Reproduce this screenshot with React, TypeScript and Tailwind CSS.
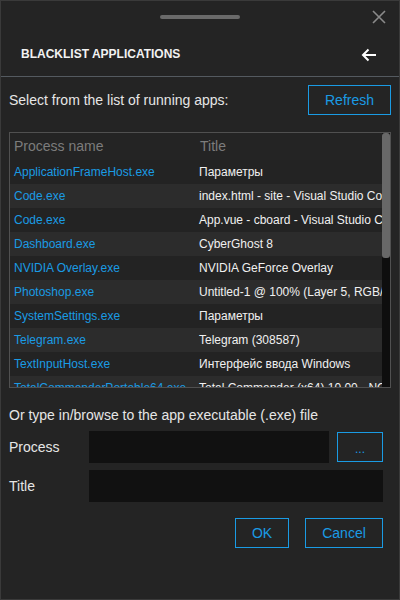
import React from "react";

const rows: [string, string][] = [
  ["ApplicationFrameHost.exe", "Параметры"],
  ["Code.exe", "index.html - site - Visual Studio Code"],
  ["Code.exe", "App.vue - cboard - Visual Studio Code"],
  ["Dashboard.exe", "CyberGhost 8"],
  ["NVIDIA Overlay.exe", "NVIDIA GeForce Overlay"],
  ["Photoshop.exe", "Untitled-1 @ 100% (Layer 5, RGB/8)"],
  ["SystemSettings.exe", "Параметры"],
  ["Telegram.exe", "Telegram (308587)"],
  ["TextInputHost.exe", "Интерфейс ввода Windows"],
  ["TotalCommanderPortable64.exe", "Total Commander (x64) 10.00 - NOT REGISTERED"],
];

export default function App() {
  return (
    <div
      className="w-[400px] h-[600px] bg-[#242424] border border-[#3a3a3a] flex flex-col relative overflow-hidden text-[#e8e8e8]"
      style={{ fontFamily: '"Liberation Sans", Arial, sans-serif' }}
    >
      {/* top bar */}
      <div className="h-[33px] flex justify-center pt-[14px] shrink-0">
        <div className="w-[80px] h-[4px] rounded-full bg-[#6a6a6a]" />
      </div>
      <svg
        className="absolute right-[13px] top-[9px]"
        width="14"
        height="14"
        viewBox="0 0 14 14"
      >
        <path d="M1 1 L13 13 M13 1 L1 13" stroke="#8a8a8a" strokeWidth="1.6" />
      </svg>

      {/* header */}
      <div className="h-[43px] flex items-center justify-between pl-[20px] pr-[22px] shrink-0 border-b border-[#545a60]">
        <div className="text-[12px] font-bold text-[#f2f2f2] -mt-[3px]">BLACKLIST APPLICATIONS</div>
        <svg width="16" height="14" viewBox="0 0 16 14" className="-mt-[1px]">
          <path d="M15 7 H2 M7.5 1.5 L2 7 L7.5 12.5" stroke="#ffffff" strokeWidth="2" fill="none" />
        </svg>
      </div>

      <div className="px-2 flex flex-col">
        <div className="flex items-center justify-between mt-[8px]">
          <div className="text-[14px] text-[#e6e6e6]">Select from the list of running apps:</div>
          <button className="w-[83px] h-[30px] border border-[#1a9be4] text-[#1a9be4] text-[14px]">Refresh</button>
        </div>

        {/* list */}
        <div className="mt-[17px] h-[256px] border border-[#505050] flex overflow-hidden">
          <div className="flex-1 overflow-hidden flex flex-col">
            <div className="h-[27px] shrink-0 flex items-center text-[14px] text-[#7c7c7c]">
              <div className="w-[190px] pl-[4px] shrink-0">Process name</div>
              <div className="whitespace-nowrap">Title</div>
            </div>
            {rows.map(([p, t], i) => (
              <div
                key={i}
                className={
                  "h-[24px] shrink-0 flex items-center text-[12px] whitespace-nowrap " +
                  (i % 2 === 0 ? "bg-[#232323]" : "bg-[#2c2c2c]")
                }
              >
                <div className="w-[189px] pl-[4px] shrink-0 text-[#1a9be4] overflow-hidden">{p}</div>
                <div className="text-[#f0f0f0]">{t}</div>
              </div>
            ))}
          </div>
          <div className="w-[8px] shrink-0 bg-[#0e0e0e] flex flex-col">
            <div className="h-[125px] bg-[#686868] rounded-[3px]" />
          </div>
        </div>

        <div className="mt-[17px] text-[14px] text-[#e6e6e6]">Or type in/browse to the app executable (.exe) file</div>

        <div className="flex items-center mt-[5px] pr-[8px]">
          <div className="w-[80px] text-[14px] text-[#e6e6e6]">Process</div>
          <div className="w-[240px] h-[32px] bg-[#111111]" />
          <button className="ml-[8px] w-[46px] h-[30px] border border-[#1a9be4] text-[#1a9be4] text-[12px] leading-none pt-[3px]">...</button>
        </div>

        <div className="flex items-center mt-[7px] pr-[8px]">
          <div className="w-[80px] text-[14px] text-[#e6e6e6]">Title</div>
          <div className="w-[294px] h-[32px] bg-[#111111]" />
        </div>

        <div className="flex justify-end gap-[16px] mt-[16px] pr-[8px]">
          <button className="w-[54px] h-[30px] border border-[#1a9be4] text-[#1a9be4] text-[14px]">OK</button>
          <button className="w-[78px] h-[30px] border border-[#1a9be4] text-[#1a9be4] text-[14px]">Cancel</button>
        </div>
      </div>
    </div>
  );
}
